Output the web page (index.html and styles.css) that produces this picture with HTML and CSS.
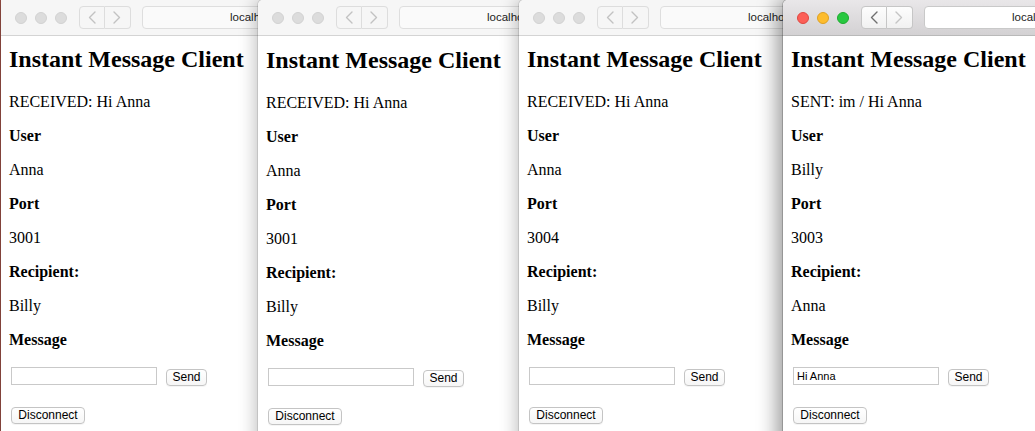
FILE: index.html
```html
<!DOCTYPE html>
<html>
<head>
<meta charset="utf-8">
<title>Instant Message Clients</title>
<link rel="stylesheet" href="styles.css">
</head>
<body>
<div class="desktop">

  <div class="window w1">
    <div class="titlebar">
      <div class="lights"><span></span><span></span><span></span></div>
      <div class="nav">
        <span class="navbtn"><svg width="26" height="23" viewBox="0 0 26 23"><polyline points="16,6 10.5,11.5 16,17" /></svg></span>
        <span class="navbtn"><svg width="26" height="23" viewBox="0 0 26 23"><polyline points="10,6 15.5,11.5 10,17" /></svg></span>
      </div>
      <div class="url">localhost:3000</div>
    </div>
    <div class="content">
      <h2>Instant Message Client</h2>
      <p>RECEIVED: Hi Anna</p>
      <p><b>User</b></p>
      <p>Anna</p>
      <p><b>Port</b></p>
      <p>3001</p>
      <p><b>Recipient:</b></p>
      <p>Billy</p>
      <p><b>Message</b></p>
      <div class="send-row"><input class="msg" type="text" value=""><button class="btn send">Send</button></div>
      <div class="disc-row"><button class="btn disc">Disconnect</button></div>
    </div>
  </div>

  <div class="window w2">
    <div class="titlebar">
      <div class="lights"><span></span><span></span><span></span></div>
      <div class="nav">
        <span class="navbtn"><svg width="26" height="23" viewBox="0 0 26 23"><polyline points="16,6 10.5,11.5 16,17" /></svg></span>
        <span class="navbtn"><svg width="26" height="23" viewBox="0 0 26 23"><polyline points="10,6 15.5,11.5 10,17" /></svg></span>
      </div>
      <div class="url">localhost:3000</div>
    </div>
    <div class="content">
      <h2>Instant Message Client</h2>
      <p>RECEIVED: Hi Anna</p>
      <p><b>User</b></p>
      <p>Anna</p>
      <p><b>Port</b></p>
      <p>3001</p>
      <p><b>Recipient:</b></p>
      <p>Billy</p>
      <p><b>Message</b></p>
      <div class="send-row"><input class="msg" type="text" value=""><button class="btn send">Send</button></div>
      <div class="disc-row"><button class="btn disc">Disconnect</button></div>
    </div>
  </div>

  <div class="window w3">
    <div class="titlebar">
      <div class="lights"><span></span><span></span><span></span></div>
      <div class="nav">
        <span class="navbtn"><svg width="26" height="23" viewBox="0 0 26 23"><polyline points="16,6 10.5,11.5 16,17" /></svg></span>
        <span class="navbtn"><svg width="26" height="23" viewBox="0 0 26 23"><polyline points="10,6 15.5,11.5 10,17" /></svg></span>
      </div>
      <div class="url">localhost:3000</div>
    </div>
    <div class="content">
      <h2>Instant Message Client</h2>
      <p>RECEIVED: Hi Anna</p>
      <p><b>User</b></p>
      <p>Anna</p>
      <p><b>Port</b></p>
      <p>3004</p>
      <p><b>Recipient:</b></p>
      <p>Billy</p>
      <p><b>Message</b></p>
      <div class="send-row"><input class="msg" type="text" value=""><button class="btn send">Send</button></div>
      <div class="disc-row"><button class="btn disc">Disconnect</button></div>
    </div>
  </div>

  <div class="window w4 active">
    <div class="titlebar">
      <div class="lights"><span class="red"></span><span class="yellow"></span><span class="green"></span></div>
      <div class="nav">
        <span class="navbtn back"><svg width="26" height="23" viewBox="0 0 26 23"><polyline points="16,6 10.5,11.5 16,17" /></svg></span>
        <span class="navbtn fwd"><svg width="26" height="23" viewBox="0 0 26 23"><polyline points="10,6 15.5,11.5 10,17" /></svg></span>
      </div>
      <div class="url">localhost:3000</div>
    </div>
    <div class="content">
      <h2>Instant Message Client</h2>
      <p>SENT: im / Hi Anna</p>
      <p><b>User</b></p>
      <p>Billy</p>
      <p><b>Port</b></p>
      <p>3003</p>
      <p><b>Recipient:</b></p>
      <p>Anna</p>
      <p><b>Message</b></p>
      <div class="send-row"><input class="msg" type="text" value="Hi Anna"><button class="btn send">Send</button></div>
      <div class="disc-row"><button class="btn disc">Disconnect</button></div>
    </div>
  </div>

</div>
</body>
</html>
```

FILE: styles.css
```css
html, body {
  margin: 0;
  padding: 0;
  width: 1035px;
  height: 431px;
  overflow: hidden;
}

body {
  background: #a9574c;
  font-family: "Liberation Serif", "Times New Roman", serif;
  color: #000;
}

.desktop {
  position: relative;
  width: 1035px;
  height: 431px;
  overflow: hidden;
}

.window {
  position: absolute;
  top: 0;
  width: 420px;
  height: 520px;
  background: #fff;
  border-radius: 5px 5px 0 0;
  box-shadow: 0 0 0 1px rgba(0, 0, 0, 0.10), -4px 0 16px rgba(0, 0, 0, 0.22);
  overflow: hidden;
  display: flex;
  flex-direction: column;
}

.w1 { left: 1px; z-index: 1; border-radius: 0; }
.w2 { left: 258px; z-index: 2; }
.w2 .content { padding-top: 10px; }
.w3 { left: 519px; z-index: 3; }
.w4 {
  left: 783px;
  z-index: 4;
  box-shadow: 0 0 0 1px rgba(0, 0, 0, 0.18), -6px 0 20px rgba(0, 0, 0, 0.40);
}

/* title bar */
.titlebar {
  flex: none;
  height: 35px;
  border-bottom: 1px solid #d4d4d4;
  background: #f6f6f6;
  display: flex;
  align-items: center;
  padding-left: 14px;
}

.lights {
  display: flex;
  gap: 8px;
}

.lights span {
  width: 12px;
  height: 12px;
  box-sizing: border-box;
  border-radius: 50%;
  background: #dcdcdc;
  border: 1px solid #d2d2d2;
}

.nav {
  display: flex;
  margin-left: 12px;
}

.navbtn {
  display: block;
  width: 26px;
  height: 23px;
  box-sizing: border-box;
  border: 1px solid #dddddd;
  background: #f6f6f6;
}

.navbtn:first-child {
  border-radius: 4px 0 0 4px;
}

.navbtn:last-child {
  border-radius: 0 4px 4px 0;
  border-left: none;
}

.navbtn svg {
  display: block;
  margin: -1px 0 0 -1px;
}

.navbtn polyline {
  fill: none;
  stroke: #c2c2c2;
  stroke-width: 1.4;
  stroke-linecap: round;
  stroke-linejoin: round;
}

.url {
  margin-left: 11px;
  width: 360px;
  height: 23px;
  box-sizing: border-box;
  border: 1px solid #dedede;
  border-radius: 4px;
  background: #fafafa;
  padding-left: 87px;
  font-family: "Liberation Sans", Arial, sans-serif;
  font-size: 11.5px;
  line-height: 21px;
  color: #222;
  white-space: nowrap;
}

/* active window */
.active .titlebar {
  background: linear-gradient(#e9e7e9, #d3d1d3);
  border-bottom-color: #b9b9b9;
}

.lights .red { background: #fc5f57; border-color: #df4741; }
.lights .yellow { background: #fdbc2e; border-color: #dea123; }
.lights .green { background: #28c840; border-color: #1eab2f; }

.active .navbtn {
  background: linear-gradient(#fdfdfd, #f1f1f1);
  border-color: #c6c6c6;
}

.active .back polyline { stroke: #6f6f6f; }
.active .fwd polyline { stroke: #c4c4c4; }

.active .url {
  background: #fff;
  border-color: #c9c9c9;
}

/* page content */
.content {
  padding: 9px 8px 0;
}

h2 {
  font-size: 24px;
  line-height: 28px;
  font-weight: bold;
  margin: 0 0 20px;
  white-space: nowrap;
}

p {
  font-size: 16px;
  line-height: 18px;
  margin: 0 0 16px;
  white-space: nowrap;
}

.send-row {
  display: flex;
  align-items: flex-start;
}

.msg {
  margin: 2px;
  width: 146px;
  height: 18px;
  box-sizing: border-box;
  border: 1px solid #c9c9c9;
  padding: 0 3px;
  font-family: "Liberation Sans", Arial, sans-serif;
  font-size: 11px;
  color: #000;
  background: #fff;
  outline: none;
}

.btn {
  height: 17px;
  box-sizing: border-box;
  padding: 0;
  border: 1px solid #c4c4c4;
  border-radius: 4px;
  background: linear-gradient(#ffffff, #f6f6f6);
  box-shadow: 0 1px 0 rgba(0, 0, 0, 0.04);
  font-family: "Liberation Sans", Arial, sans-serif;
  font-size: 12px;
  line-height: 15px;
  color: #000;
}

.send {
  width: 41px;
  margin: 4px 0 0 7px;
}

.disc-row {
  margin-top: 18px;
}

.disc {
  width: 74px;
  margin-left: 2px;
}
```
